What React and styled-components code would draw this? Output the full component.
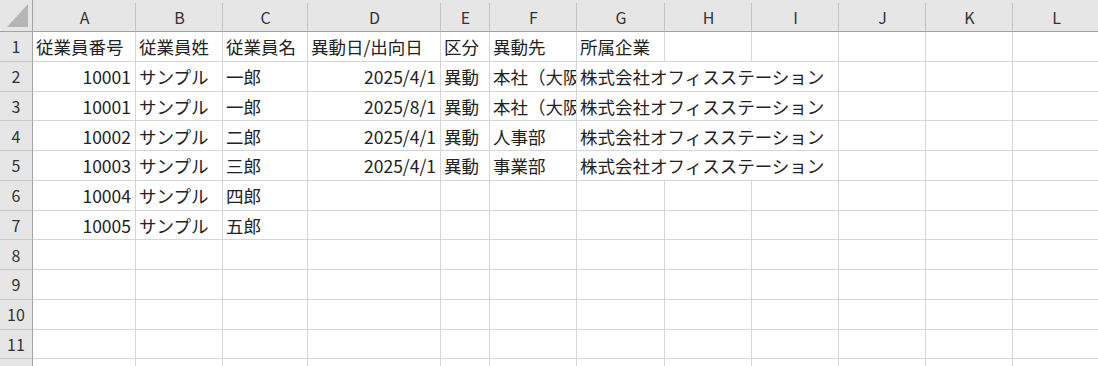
import styled, { createGlobalStyle } from "styled-components";

const GlobalStyle = createGlobalStyle`
  html, body {
    margin: 0;
    padding: 0;
    background: #ffffff;
    overflow: hidden;
  }
  body {
    font-family: "Noto Sans CJK JP", "Noto Sans", sans-serif;
  }
`;

// column letter + width in px (including the right gridline)
const COLS = [
  ["A", 103],
  ["B", 87],
  ["C", 85],
  ["D", 133],
  ["E", 49],
  ["F", 87],
  ["G", 88],
  ["H", 87],
  ["I", 87],
  ["J", 87],
  ["K", 87],
  ["L", 87],
];

const COMPANY = "株式会社オフィスステーション";

const ROWS = [
  ["従業員番号", "従業員姓", "従業員名", "異動日/出向日", "区分", "異動先", "所属企業"],
  ["10001", "サンプル", "一郎", "2025/4/1", "異動", "本社（大阪府）", COMPANY],
  ["10001", "サンプル", "一郎", "2025/8/1", "異動", "本社（大阪府）", COMPANY],
  ["10002", "サンプル", "二郎", "2025/4/1", "異動", "人事部", COMPANY],
  ["10003", "サンプル", "三郎", "2025/4/1", "異動", "事業部", COMPANY],
  ["10004", "サンプル", "四郎"],
  ["10005", "サンプル", "五郎"],
  [],
  [],
  [],
  [],
  [],
];

const isNumeric = (v) => /^[0-9/]+$/.test(v);

const Sheet = styled.div`
  display: grid;
  grid-template-columns: 33px ${COLS.map((c) => `${c[1]}px`).join(" ")};
  grid-template-rows: 32px repeat(12, 29.75px);
  width: 1098px;
  height: 366px;
  overflow: hidden;
  background: #ffffff;
`;

const Corner = styled.div`
  background: #e6e6e6;
  border-right: 1px solid #a3a3a3;
  border-bottom: 1px solid #a3a3a3;
  box-sizing: border-box;
  display: flex;
  align-items: flex-end;
  justify-content: flex-end;
  padding: 0 4px 4px 0;

  svg {
    display: block;
  }
`;

const ColHead = styled.div`
  position: relative;
  background: #e6e6e6;
  border-bottom: 1px solid #a3a3a3;
  box-sizing: border-box;
  display: flex;
  align-items: center;
  justify-content: center;
  padding-top: 3px;
  font-size: 16px;
  color: #333333;

  &::after {
    content: "";
    position: absolute;
    top: 3px;
    bottom: 0;
    right: 0;
    width: 1px;
    background: #c4c4c4;
  }
`;

const RowHead = styled.div`
  background: #e6e6e6;
  border-right: 1px solid #a3a3a3;
  border-bottom: 1px solid #c9c9c9;
  box-sizing: border-box;
  display: flex;
  align-items: center;
  justify-content: center;
  font-size: 16px;
  color: #333333;
`;

const Cell = styled.div`
  grid-column: span ${(p) => p.$span || 1};
  border-right: 1px solid #d6d6d6;
  border-bottom: 1px solid #d6d6d6;
  box-sizing: border-box;
  display: flex;
  align-items: center;
  justify-content: ${(p) => (p.$right ? "flex-end" : "flex-start")};
  padding: 1px ${(p) => (p.$right ? "4px" : "0")} 0 ${(p) => (p.$right ? "0" : "3px")};
  overflow: hidden;
  white-space: nowrap;
  font-size: 17.5px;
  color: #222222;
`;

function DataRow({ index, values }) {
  const cells = [];
  let col = 0;
  while (col < COLS.length) {
    const value = values[col] || "";
    // long text in G spills over the empty H and I cells
    const span = col === 6 && value.length > 6 ? 3 : 1;
    cells.push(
      <Cell key={col} $span={span} $right={isNumeric(value)}>
        {value}
      </Cell>
    );
    col += span;
  }
  return (
    <>
      <RowHead>{index}</RowHead>
      {cells}
    </>
  );
}

export default function App() {
  return (
    <>
      <GlobalStyle />
      <Sheet>
        <Corner>
          <svg width="21" height="23" viewBox="0 0 21 23">
            <polygon points="0,23 21,23 21,0" fill="#b5b5b5" />
          </svg>
        </Corner>
        {COLS.map(([letter]) => (
          <ColHead key={letter}>{letter}</ColHead>
        ))}
        {ROWS.map((values, i) => (
          <DataRow key={i} index={i + 1} values={values} />
        ))}
      </Sheet>
    </>
  );
}
